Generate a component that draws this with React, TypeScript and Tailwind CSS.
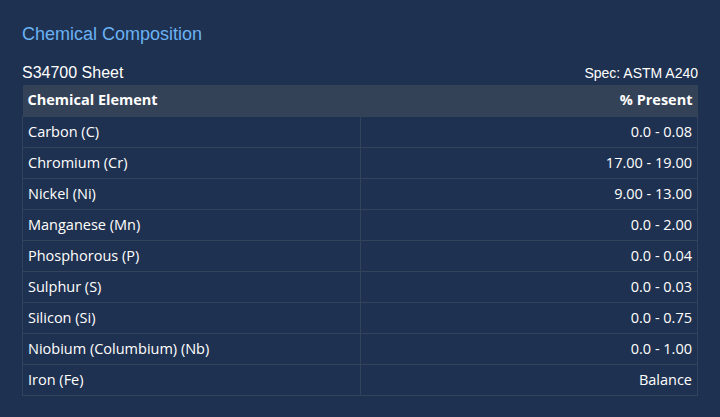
const rows = [
  { name: "Carbon (C)", value: "0.0 - 0.08" },
  { name: "Chromium (Cr)", value: "17.00 - 19.00" },
  { name: "Nickel (Ni)", value: "9.00 - 13.00" },
  { name: "Manganese (Mn)", value: "0.0 - 2.00" },
  { name: "Phosphorous (P)", value: "0.0 - 0.04" },
  { name: "Sulphur (S)", value: "0.0 - 0.03" },
  { name: "Silicon (Si)", value: "0.0 - 0.75" },
  { name: "Niobium (Columbium) (Nb)", value: "0.0 - 1.00" },
  { name: "Iron (Fe)", value: "Balance" },
];

export default function App() {
  return (
    <div className="min-h-[417px] w-[720px] bg-[#1f3150] px-[22px] pt-[22px] font-['Liberation_Sans',Arial,sans-serif]">
      <h2 className="text-[18px] leading-[24px] text-[#6ab2f4]">Chemical Composition</h2>

      <div className="mt-[18px] flex items-baseline justify-between">
        <span className="text-[16px] leading-[18px] text-white">S34700 Sheet</span>
        <span className="text-[14px] leading-[18px] text-white">Spec: ASTM A240</span>
      </div>

      <table className="mt-[3px] w-full border-collapse font-['Open_Sans','Noto_Sans',sans-serif] text-[14.5px] text-white">
        <thead>
          <tr className="h-[31px] bg-[#344257]">
            <th className="w-1/2 px-[5px] text-left font-bold">Chemical Element</th>
            <th className="px-[5px] text-right font-bold">% Present</th>
          </tr>
        </thead>
        <tbody>
          {rows.map((row) => (
            <tr key={row.name} className="h-[31px]">
              <td className="border border-[#33435c] px-[5px]">{row.name}</td>
              <td className="border border-[#33435c] px-[5px] text-right">{row.value}</td>
            </tr>
          ))}
        </tbody>
      </table>
    </div>
  );
}
